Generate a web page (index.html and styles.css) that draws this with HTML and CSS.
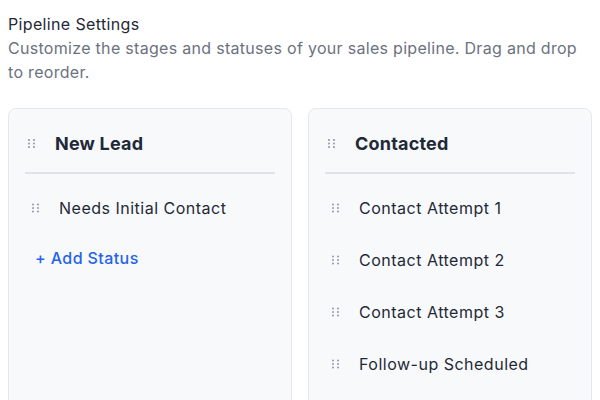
FILE: index.html
```html
<!DOCTYPE html>
<html lang="en">
<head>
  <meta charset="UTF-8" />
  <meta name="viewport" content="width=device-width, initial-scale=1.0"/>
  <title>Pipeline Settings</title>
  <link rel="stylesheet" href="styles.css">
</head>
<body>

  <div class="page">
    <h1 class="page-title">Pipeline Settings</h1>
    <p class="page-desc">Customize the stages and statuses of your sales pipeline. Drag and drop to reorder.</p>

    <div class="board">
      <div class="stage">
        <div class="stage-head">
          <svg class="handle" viewBox="0 0 8 9"><circle cx="1" cy="1" r="1.1"/><circle cx="6" cy="1" r="1.1"/><circle cx="1" cy="4.5" r="1.1"/><circle cx="6" cy="4.5" r="1.1"/><circle cx="1" cy="8" r="1.1"/><circle cx="6" cy="8" r="1.1"/></svg>
          <span class="stage-name">New Lead</span>
        </div>
        <div class="status-list">
          <div class="status">
            <svg class="handle" viewBox="0 0 8 9"><circle cx="1" cy="1" r="1.1"/><circle cx="6" cy="1" r="1.1"/><circle cx="1" cy="4.5" r="1.1"/><circle cx="6" cy="4.5" r="1.1"/><circle cx="1" cy="8" r="1.1"/><circle cx="6" cy="8" r="1.1"/></svg>
            <span>Needs Initial Contact</span>
          </div>
        </div>
        <button class="add-status">+ Add Status</button>
      </div>

      <div class="stage">
        <div class="stage-head">
          <svg class="handle" viewBox="0 0 8 9"><circle cx="1" cy="1" r="1.1"/><circle cx="6" cy="1" r="1.1"/><circle cx="1" cy="4.5" r="1.1"/><circle cx="6" cy="4.5" r="1.1"/><circle cx="1" cy="8" r="1.1"/><circle cx="6" cy="8" r="1.1"/></svg>
          <span class="stage-name">Contacted</span>
        </div>
        <div class="status-list">
          <div class="status">
            <svg class="handle" viewBox="0 0 8 9"><circle cx="1" cy="1" r="1.1"/><circle cx="6" cy="1" r="1.1"/><circle cx="1" cy="4.5" r="1.1"/><circle cx="6" cy="4.5" r="1.1"/><circle cx="1" cy="8" r="1.1"/><circle cx="6" cy="8" r="1.1"/></svg>
            <span>Contact Attempt 1</span>
          </div>
          <div class="status">
            <svg class="handle" viewBox="0 0 8 9"><circle cx="1" cy="1" r="1.1"/><circle cx="6" cy="1" r="1.1"/><circle cx="1" cy="4.5" r="1.1"/><circle cx="6" cy="4.5" r="1.1"/><circle cx="1" cy="8" r="1.1"/><circle cx="6" cy="8" r="1.1"/></svg>
            <span>Contact Attempt 2</span>
          </div>
          <div class="status">
            <svg class="handle" viewBox="0 0 8 9"><circle cx="1" cy="1" r="1.1"/><circle cx="6" cy="1" r="1.1"/><circle cx="1" cy="4.5" r="1.1"/><circle cx="6" cy="4.5" r="1.1"/><circle cx="1" cy="8" r="1.1"/><circle cx="6" cy="8" r="1.1"/></svg>
            <span>Contact Attempt 3</span>
          </div>
          <div class="status">
            <svg class="handle" viewBox="0 0 8 9"><circle cx="1" cy="1" r="1.1"/><circle cx="6" cy="1" r="1.1"/><circle cx="1" cy="4.5" r="1.1"/><circle cx="6" cy="4.5" r="1.1"/><circle cx="1" cy="8" r="1.1"/><circle cx="6" cy="8" r="1.1"/></svg>
            <span>Follow-up Scheduled</span>
          </div>
        </div>
        <button class="add-status">+ Add Status</button>
      </div>
    </div>
  </div>

</body>
</html>
```

FILE: styles.css
```css
body {
  margin: 0;
  background-color: #fff;
  color: #1f2937;
  font-family: Inter, "Open Sans", sans-serif;
}

.page {
  padding: 12px 8px;
}

.page-title {
  margin: 0;
  font-size: 16px;
  font-weight: 400;
  line-height: 24px;
  letter-spacing: 0.35px;
  color: #1f2937;
}

.page-desc {
  margin: 0 0 24px;
  font-size: 16px;
  line-height: 24px;
  color: #6b7280;
  letter-spacing: 0.3px;
}

.board {
  display: grid;
  grid-template-columns: 1fr 1fr;
  gap: 16px;
}

.stage {
  background-color: #f8f9fb;
  border: 1px solid #e5e7eb;
  border-radius: 8px;
  padding: 16px;
  min-height: 340px;
}

.stage-head {
  display: flex;
  align-items: center;
  height: 36px;
  padding: 0 3px 11px;
  border-bottom: 2px solid #e1e3e8;
}

.stage-name {
  font-size: 18px;
  font-weight: 700;
  letter-spacing: 0.2px;
  color: #1f2937;
}

.handle {
  width: 8px;
  height: 9px;
  margin-right: 19px;
  fill: #9ca3af;
  flex-shrink: 0;
}

.status-list {
  display: flex;
  flex-direction: column;
  gap: 8px;
  margin-top: 12px;
}

.status {
  display: flex;
  align-items: center;
  height: 44px;
  padding: 0 7px;
  font-size: 16px;
  letter-spacing: 0.5px;
  color: #1f2937;
}

.status .handle {
  height: 10px;
}

.add-status {
  display: block;
  margin-top: 8px;
  height: 40px;
  padding: 0 10px;
  border: none;
  background: none;
  font-family: inherit;
  font-size: 16px;
  font-weight: 500;
  letter-spacing: 0.4px;
  color: #2563eb;
  cursor: pointer;
}
```
